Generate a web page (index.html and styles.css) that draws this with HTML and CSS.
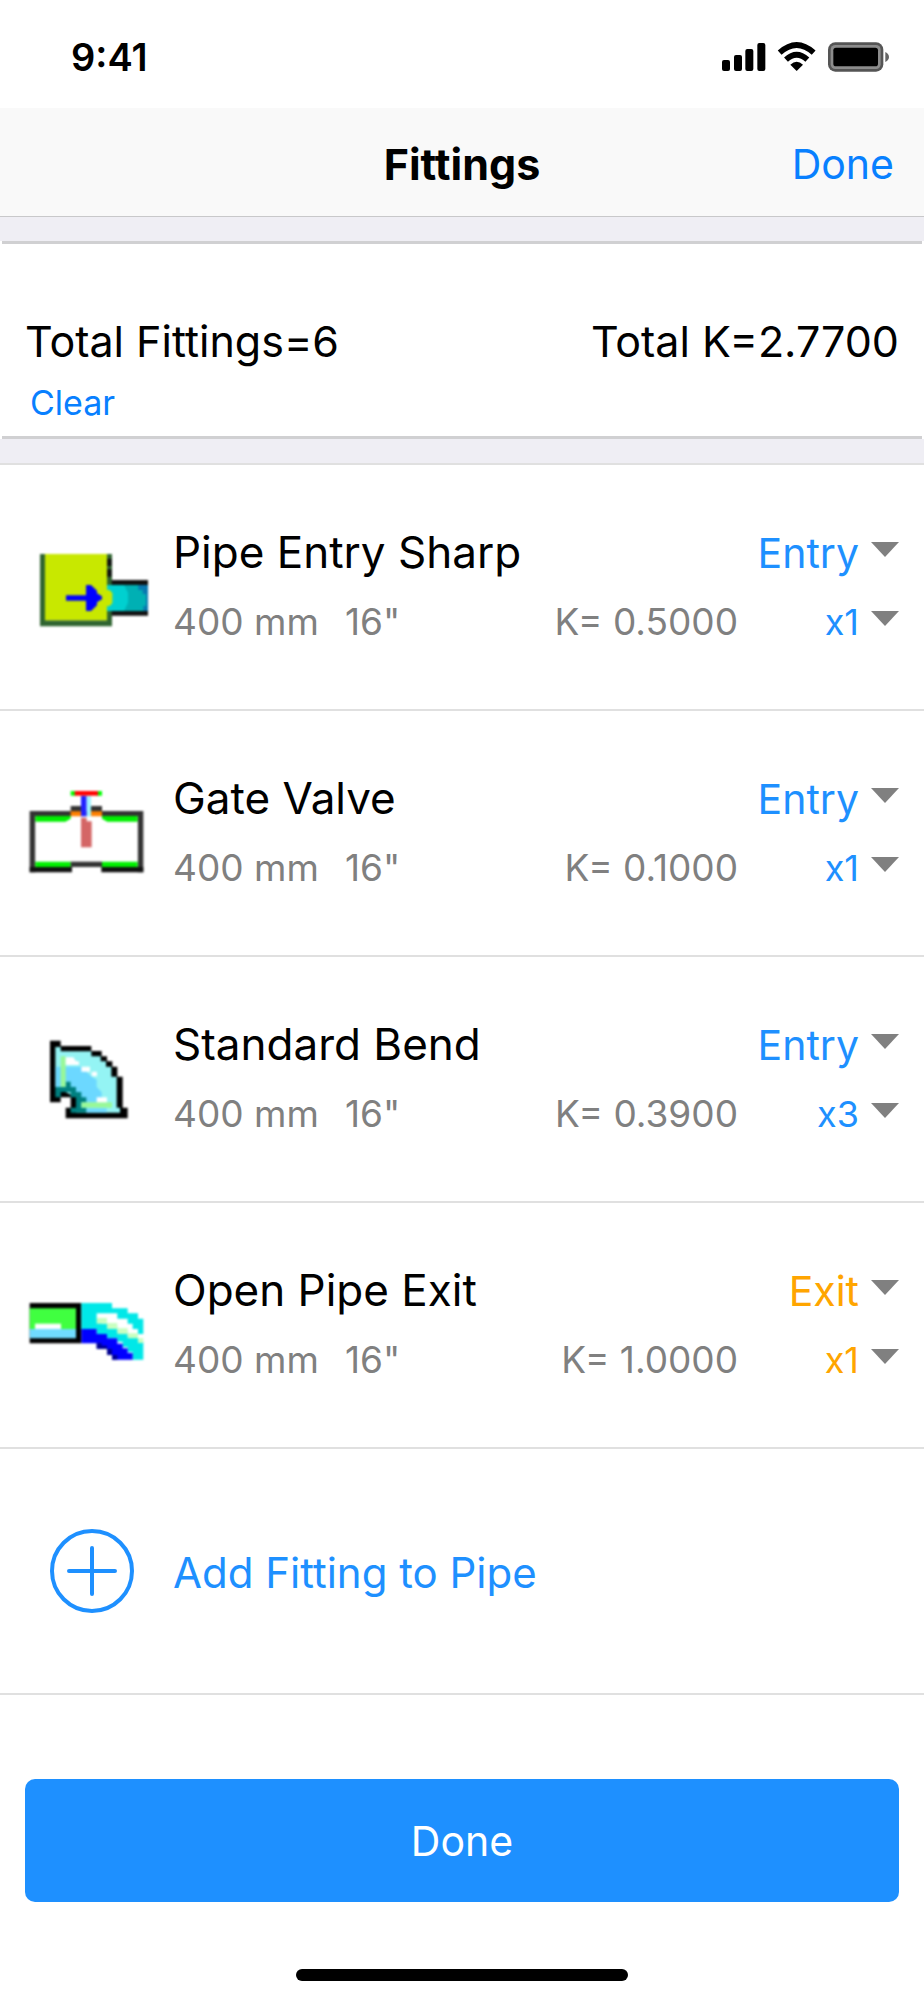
FILE: index.html
```html
<!DOCTYPE html>
<html lang="en">
<head>
    <meta charset="UTF-8">
    <meta name="viewport" content="width=device-width, initial-scale=1.0">
    <title>Fittings</title>
    <link rel="stylesheet" href="styles.css">
</head>
<body>
    <div class="status-bar">
        <span class="time">9:41</span>
        <svg class="status-icons" viewBox="774 123 510 96" aria-hidden="true">
            <!-- signal -->
            <rect x="780" y="180" width="24" height="33" rx="6"/>
            <rect x="816" y="165" width="24" height="48" rx="6"/>
            <rect x="850" y="147" width="24" height="66" rx="6"/>
            <rect x="886" y="129" width="24" height="84" rx="6"/>
            <!-- wifi -->
            <path d="M953 158 Q1004 112 1055 158" fill="none" stroke="#000" stroke-width="17"/>
            <path d="M972 179 Q1004 149 1036 179" fill="none" stroke="#000" stroke-width="17"/>
            <path d="M985 194 Q1004 177 1023 194 L1004 213 Z"/>
            <!-- battery -->
            <rect x="1098" y="127" width="166" height="88" rx="22" fill="#555"/>
            <rect x="1106" y="135" width="150" height="72" rx="14" fill="#8c8c8c"/>
            <rect x="1114" y="143" width="134" height="56" rx="8"/>
            <path d="M1270 156 Q1281 162 1281 171 Q1281 180 1270 186 Z" fill="#666"/>
        </svg>
    </div>

    <header class="nav-bar">
        <h1>Fittings</h1>
        <button class="nav-done" type="button">Done</button>
    </header>

    <main>
        <section class="summary">
            <div class="summary-inner">
                <div class="totals">
                    <span>Total Fittings=6</span>
                    <span>Total K=2.7700</span>
                </div>
                <button class="clear-button" type="button">Clear</button>
            </div>
        </section>

        <ul class="fittings">
            <li class="fitting">
                <svg class="fitting-icon" viewBox="54 21 360 300" aria-hidden="true">
                    <path fill="#2f6430" d="M90 72H105V271H291V72H306V289H90Z"/>
                    <path fill="#c8e800" d="M105 72H291V271H105Z"/>
                    <path fill="#111" d="M291 86H305V108H291ZM291 118H305V140H291ZM305 150H414V165H305ZM305 243H414V257H305Z"/>
                    <path fill="#00d0d0" d="M291 165H354V243H291Z"/>
                    <path fill="#00b0b4" d="M342 165H414V243H342L354 218V188Z"/>
                    <path fill="#0878b0" d="M385 165H414V243H400V228H408V192H398V180H385Z"/>
                    <path fill="#c8e800" d="M285 180H299L307 190V219L299 228H285Z"/>
                    <path fill="#0000ff" d="M168 196H228V165H243L261 182V190L276 199V208L261 217V226L243 243H228V212H168Z"/>
                </svg>
                <h2>Pipe Entry Sharp</h2>
                <select class="kind" aria-label="Pipe Entry Sharp position">
                    <option selected>Entry</option>
                    <option>Exit</option>
                </select>
                <span class="size">400 mm</span>
                <span class="inches">16"</span>
                <span class="k-value">K= 0.5000</span>
                <select class="count" aria-label="Pipe Entry Sharp quantity">
                    <option selected>x1</option>
                    <option>x2</option>
                    <option>x3</option>
                </select>
            </li>
            <li class="fitting">
                <svg class="fitting-icon" viewBox="54 39 360 300" aria-hidden="true">
                    <path fill="#333" d="M59 123H182V108H213V123H243V108H276V123H400V307H383V138H76V307H59Z"/>
                    <path fill="#fff" d="M76 138H383V291H76Z"/>
                    <path fill="#00f000" d="M76 138H182V146L166 155H76ZM276 138H383V155H292L276 146ZM76 275H182V291H76ZM276 275H383V291H276Z"/>
                    <path fill="#111" d="M59 291H186V307H59ZM274 291H400V307H274Z"/>
                    <path fill="#333" d="M182 275H276V291H182Z"/>
                    <path fill="#ff8000" d="M182 124H213V139H182ZM243 124H276V139H243Z"/>
                    <path fill="#0f0" d="M182 63H198V77H182ZM260 63H276V77H260Z"/>
                    <path fill="#ff0000" d="M194 63H264V77H194Z"/>
                    <path fill="#2020ff" d="M213 78H230V139H213Z"/>
                    <path fill="#a0f4ff" d="M230 78H243V139H230Z"/>
                    <path fill="#d46666" d="M213 143H230V154H245V232H213Z"/>
                </svg>
                <h2>Gate Valve</h2>
                <select class="kind" aria-label="Gate Valve position">
                    <option selected>Entry</option>
                    <option>Exit</option>
                </select>
                <span class="size">400 mm</span>
                <span class="inches">16"</span>
                <span class="k-value">K= 0.1000</span>
                <select class="count" aria-label="Gate Valve quantity">
                    <option selected>x1</option>
                    <option>x2</option>
                    <option>x3</option>
                </select>
            </li>
            <li class="fitting">
                <svg class="fitting-icon" viewBox="54 30 360 300" aria-hidden="true">
                    <path fill="#000" d="M120 65H152V81H244V96H275V112H291V127H307V143H322V173H338V266H353V298H167V266H182V235H152V250H120Z"/>
                    <path fill="#94f4f4" d="M136 84H152V97H244V112H272V127H288V143H304V173H320V266H330V281H198V235L136 204Z"/>
                    <path fill="#6cd8ff" d="M137 143H214L229 158L245 173L260 182V204L275 220V235L260 250H214L182 204H137Z"/>
                    <path fill="#6cd8ff" d="M229 268H290V281H229Z"/>
                    <path fill="#008080" d="M136 204H167V188H182V204H198V219H214V235H229V250H214V266H229V281H182V266H198V235H182V219H152V235H136Z"/>
                    <path fill="#98f898" d="M152 112H167V204H152ZM214 250H306V266H214Z"/>
                    <path fill="#fff" d="M167 115H190L198 127H207V138H167ZM214 143H240V158H214ZM245 158H261V172H245ZM260 235H291V250H260Z"/>
                </svg>
                <h2>Standard Bend</h2>
                <select class="kind" aria-label="Standard Bend position">
                    <option selected>Entry</option>
                    <option>Exit</option>
                </select>
                <span class="size">400 mm</span>
                <span class="inches">16"</span>
                <span class="k-value">K= 0.3900</span>
                <select class="count" aria-label="Standard Bend quantity">
                    <option>x1</option>
                    <option>x2</option>
                    <option selected>x3</option>
                </select>
            </li>
            <li class="fitting exit">
                <svg class="fitting-icon" viewBox="54 -12 360 300" aria-hidden="true">
                    <path fill="#000" d="M59 72H214V193H59Z"/>
                    <path fill="#40ff40" d="M59 88H198V150H59Z"/>
                    <path fill="#70dcff" d="M59 150H198V178H59Z"/>
                    <path fill="#fff" d="M75 134H153V150H75Z"/>
                    <path fill="#00e8e8" d="M214 72H306V88H353V103H384V119H400V165H384V150H368V134H353V119H322V103H260V119H275V134H291V143H322V158H353V173H384V188H400V242H368V219H353V204H338V188H322V178H291V165H260V150H214Z"/>
                    <path fill="#c8ffc0" d="M260 117H291V132H322V148H353V163H384V178H400V192H384V178H353V165H322V150H291V134H260Z"/>
                    <path fill="#0000ff" d="M214 150H260V165H291V178H322V194H338V208H353V222H368V242H306V225H291V208H260V193H214Z"/>
                    <path fill="#000090" d="M260 193H275V200H291V210H306V228H322V242H306V228H291V210H260Z"/>
                </svg>
                <h2>Open Pipe Exit</h2>
                <select class="kind" aria-label="Open Pipe Exit position">
                    <option>Entry</option>
                    <option selected>Exit</option>
                </select>
                <span class="size">400 mm</span>
                <span class="inches">16"</span>
                <span class="k-value">K= 1.0000</span>
                <select class="count" aria-label="Open Pipe Exit quantity">
                    <option selected>x1</option>
                    <option>x2</option>
                    <option>x3</option>
                </select>
            </li>
            <li class="add-row">
                <button class="add-button" type="button">
                    <svg class="add-icon" viewBox="0 0 84 84" aria-hidden="true">
                        <circle cx="42" cy="42" r="40"/>
                        <path d="M42 19V65M19 42H65"/>
                    </svg>
                    <span>Add Fitting to Pipe</span>
                </button>
            </li>
        </ul>
    </main>

    <footer class="footer">
        <button class="done-button" type="button">Done</button>
        <div class="home-indicator"></div>
    </footer>
</body>
</html>
```

FILE: styles.css
```css
* {
    box-sizing: border-box;
}
body {
    font-family: Inter, "Liberation Sans", sans-serif;
    font-size: 41px;
    line-height: 50px;
    margin: 0;
    min-height: 100vh;
    display: flex;
    flex-direction: column;
    background-color: white;
    color: black;
}
h1, h2, ul {
    margin: 0;
    padding: 0;
}
button, select {
    font: inherit;
    border: none;
    padding: 0;
    background: none;
    cursor: pointer;
}

.status-bar {
    height: 108px;
    display: flex;
    justify-content: space-between;
    align-items: center;
    padding: 6px 34px 0 71px;
}
.time {
    font-size: 38px;
    font-weight: 600;
}
.status-icons {
    width: 170px;
    height: 32px;
}

.nav-bar {
    height: 109px;
    display: grid;
    grid-template-columns: 1fr auto 1fr;
    align-items: center;
    padding: 3px 30px 0;
    background-color: #f9f9f9;
    border-bottom: 1px solid #c8c8ca;
}
.nav-bar h1 {
    grid-column: 2;
    font-size: 43px;
    font-weight: 700;
}
.nav-done {
    justify-self: end;
    color: #0880ff;
}

main {
    background-color: #efeef4;
    padding-top: 24px;
}
.summary {
    padding: 0 2px;
    background-color: white;
}
.summary-inner {
    padding: 72px 23px 8px;
    border-top: 3px solid #d0d0d2;
    border-bottom: 3px solid #d0d0d2;
}
.totals {
    display: flex;
    justify-content: space-between;
    font-size: 43px;
}
.clear-button {
    display: block;
    margin-top: 12px;
    padding-left: 5px;
    font-size: 34px;
    color: #0880ff;
}

.fittings {
    list-style: none;
    margin-top: 24px;
    background-color: white;
    border-top: 2px solid #e0e0e0;
}
.fitting {
    height: 246px;
    display: grid;
    grid-template-columns: 145px 172px 1fr 161px;
    grid-template-rows: 50px 50px;
    align-content: center;
    align-items: baseline;
    row-gap: 20px;
    padding: 0 25px 0 28px;
    border-bottom: 2px solid #e0e0e0;
}
.fitting-icon {
    width: 120px;
    height: 100px;
    grid-row: 1 / 3;
    align-self: center;
    filter: blur(1px);
}
.fitting h2 {
    grid-column: 2 / 4;
    font-size: 44px;
    font-weight: 400;
}
.fitting select {
    width: 100%;
    height: 50px;
    appearance: none;
    color: #1e90ff;
    text-align-last: right;
    padding-right: 40px;
    background: url("data:image/svg+xml,%3Csvg xmlns='http://www.w3.org/2000/svg' viewBox='0 0 28 15'%3E%3Cpath d='M0 0H28L14 15Z' fill='%23808080'/%3E%3C/svg%3E") no-repeat right 14px / 28px 15px;
}
.fitting .count {
    font-size: 36px;
}
.exit select {
    color: #ffa500;
}
.size, .inches, .k-value {
    font-size: 37px;
    color: #808080;
}
.k-value {
    grid-column: 3;
    grid-row: 2;
    justify-self: end;
}
.inches {
    grid-column: 3;
    grid-row: 2;
}
.add-row {
    height: 246px;
    border-bottom: 2px solid #e0e0e0;
}
.add-button {
    width: 100%;
    height: 100%;
    display: flex;
    align-items: center;
    gap: 39px;
    padding-left: 50px;
    font-size: 42px;
    color: #1e90ff;
}
.add-button span {
    padding-top: 4px;
}
.add-icon {
    width: 84px;
    height: 84px;
    fill: none;
    stroke: #1e90ff;
    stroke-width: 4;
    stroke-linecap: round;
}

.footer {
    flex: 1;
    display: flex;
    flex-direction: column;
    justify-content: space-between;
    align-items: center;
    padding: 84px 25px 19px;
}
.done-button {
    width: 100%;
    height: 123px;
    border-radius: 10px;
    background-color: #1e90ff;
    color: white;
}
.home-indicator {
    width: 38%;
    height: 12px;
    border-radius: 6px;
    background-color: black;
}
```
